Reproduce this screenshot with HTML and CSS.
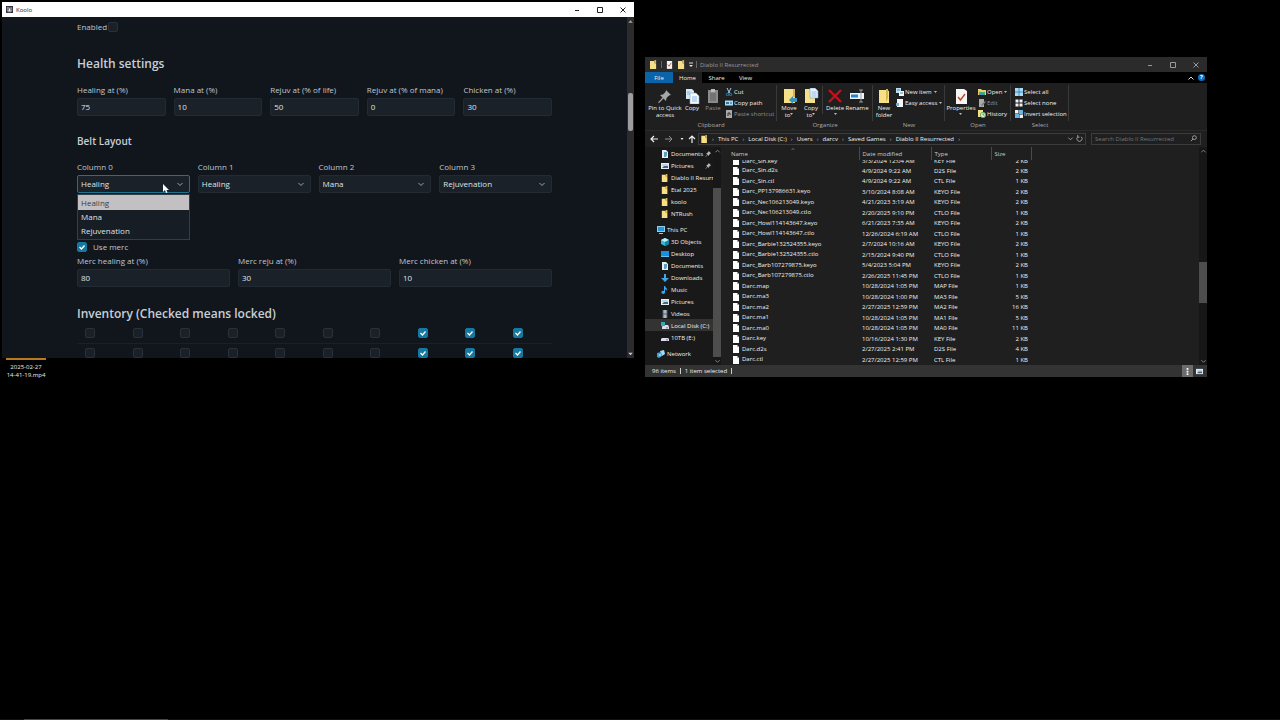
FILE: index.html
```html
<!DOCTYPE html>
<html lang="en">
<head>
<meta charset="utf-8">
<title>Desktop</title>
<link rel="stylesheet" href="styles.css">
</head>
<body>
<svg class="sprite" aria-hidden="true">
  <symbol id="folder" viewBox="0 0 8 10"><path d="M0 1h5v2l2 1v6H0z" fill="#f7df87"/><path d="M5 0h2v4H5z" fill="#e0b94c"/></symbol>
  <symbol id="file" viewBox="0 0 6 8"><path d="M0 0h4l2 2v6H0z" fill="#fff"/><path d="M4 0l2 2H4z" fill="#aaa"/></symbol>
  <symbol id="doc" viewBox="0 0 8 8"><path d="M1 0h4l2 2v6H1z" fill="#e8f0f4"/><path d="M3 2h3v3l-1 2H3z" fill="#5c9fc0"/></symbol>
  <symbol id="pic" viewBox="0 0 8 8"><path d="M0 1h8v6H0z" fill="#e6eef3"/><path d="M1 2h6v2H1z" fill="#b6d6e8"/><path d="M1 6l2-2h4v2z" fill="#4b6472"/></symbol>
  <symbol id="pc" viewBox="0 0 8 8"><path d="M0 0h8v6H0z" fill="#9bcbe2"/><path d="M1 1h6v4H1z" fill="#1f98dd"/><path d="M2 7h4v1H2z" fill="#9bcbe2"/></symbol>
  <symbol id="cube" viewBox="0 0 8 8"><path d="M0 2l4-2 4 2v4L4 8 0 6z" fill="#32b9d6"/><path d="M0 2l4-2 4 2-4 2z" fill="#c2eff4"/><path d="M4 4l4-2v4L4 8z" fill="#1585a6"/></symbol>
  <symbol id="screen" viewBox="0 0 8 8"><path d="M0 1h8v6H0z" fill="#1591df"/><path d="M0 6h8v1H0z" fill="#61c1ef"/></symbol>
  <symbol id="down" viewBox="0 0 8 8"><path d="M3 0h2v4h3L4 8 0 4h3z" fill="#41a5e6"/></symbol>
  <symbol id="note" viewBox="0 0 8 8"><path d="M3 0h1c0 2 3 2 2 5-.5-2-2-1.500-2-1.500V6.500A1.800 1.500 0 1 1 3 5z" fill="#3aa7ef"/></symbol>
  <symbol id="film" viewBox="0 0 8 8"><path d="M1 0h6v8H1z" fill="#55606a"/><path d="M2.500 0h3v3.500h-3zM2.500 4.500h3V8h-3z" fill="#a9b9c4"/><path d="M1 1h1M1 3h1M1 5h1M1 7h1M6 1h1M6 3h1M6 5h1M6 7h1" stroke="#111"/></symbol>
  <symbol id="disk" viewBox="0 0 8 8"><path d="M1 4h6l1 1v2H0V5z" fill="#dde"/><path d="M5 5.500h2v.8H5z" fill="#467"/></symbol>
  <symbol id="sysdisk" viewBox="0 0 8 8"><path d="M2 3h5l1 2v2H1V5z" fill="#dde"/><path d="M0 0h4v4H0z" fill="#35a7b8"/><path d="M5 5.500h2v.8H5z" fill="#467"/></symbol>
  <symbol id="net" viewBox="0 0 8 8"><path d="M3 1l4-1 1 4-3 2z" fill="#a6daf1"/><path d="M0 3l4-1 1 4-3 2-2-1z" fill="#3c9fd8"/><circle cx="3" cy="5" r="1.300" fill="#8bd0ef"/></symbol>
  <symbol id="pushpin" viewBox="0 0 8 8"><path d="M5 0l3 3-1 .5-1.500 1.500-.5 1.500L3.500 5 1 8l-.5-.5L3 4.500 1.500 3 3 2.500 4.500 1z" fill="#b5b5b5"/></symbol>
  <symbol id="up" viewBox="0 0 8 8"><path d="M1.500 5.500L4 3l2.500 2.500" fill="none" stroke="currentColor"/></symbol>
  <symbol id="dn" viewBox="0 0 8 8"><path d="M1.500 3L4 5.500 6.500 3" fill="none" stroke="currentColor"/></symbol>
  <symbol id="caret" viewBox="0 0 4 4"><path d="M0 1h4L2 3z" fill="currentColor"/></symbol>
  <symbol id="left-arrow" viewBox="0 0 8 8"><path d="M8 4H1M4 1L1 4l3 3" fill="none" stroke="currentColor" stroke-width="1.200"/></symbol>
  <symbol id="min" viewBox="0 0 8 8"><path d="M2 4.500h4" stroke="currentColor" fill="none"/></symbol>
  <symbol id="max" viewBox="0 0 8 8"><path d="M1.500 1.500h5v5h-5z" stroke="currentColor" fill="none"/></symbol>
  <symbol id="close" viewBox="0 0 8 8"><path d="M1.500 1.500l5 5M6.500 1.500l-5 5" stroke="currentColor" fill="none"/></symbol>
</svg>

<main class="desktop">
  <div class="shortcut"><span class="thumb"></span>2025-02-27<br>14-41-19.mp4</div>

  <section class="window koolo" aria-label="Koolo">
    <header class="koolo-bar">
      <svg class="app-icon" viewBox="0 0 8 8"><path d="M0 0h8v8H0z" fill="#33333d"/><path d="M1 1h2l1 1 2-1 1 1v4L5 7H2L1 5z" fill="#8e8795"/><path d="M3 3h2v3H3z" fill="#eee"/><path d="M2 3h1v1H2zM5 3h1v1H5z" fill="#15151d"/></svg>
      <span class="koolo-name">Koolo</span>
      <button class="win-btn" aria-label="Minimize"><svg><use href="#min"/></svg></button>
      <button class="win-btn" aria-label="Maximize"><svg><use href="#max"/></svg></button>
      <button class="win-btn" aria-label="Close"><svg><use href="#close"/></svg></button>
    </header>
    <div class="koolo-body">
      <form class="settings">
        <div class="check-row tight"><label for="enabled">Enabled</label><input type="checkbox" id="enabled"></div>
        <h2>Health settings</h2>
        <div class="fields">
          <div class="field"><label for="h1">Healing at (%)</label><input type="text" id="h1" value="75"></div>
          <div class="field"><label for="h2">Mana at (%)</label><input type="text" id="h2" value="10"></div>
          <div class="field"><label for="h3">Rejuv at (% of life)</label><input type="text" id="h3" value="50"></div>
          <div class="field"><label for="h4">Rejuv at (% of mana)</label><input type="text" id="h4" value="0"></div>
          <div class="field"><label for="h5">Chicken at (%)</label><input type="text" id="h5" value="30"></div>
        </div>
        <h3>Belt Layout</h3>
        <div class="fields">
          <div class="field open"><label for="c0">Column 0</label><select id="c0"><option>Healing</option><option>Mana</option><option>Rejuvenation</option></select>
            <ul class="options" role="listbox" aria-label="Column 0"><li role="option" aria-selected="true" class="picked">Healing</li><li role="option" aria-selected="false">Mana</li><li role="option" aria-selected="false">Rejuvenation</li></ul>
            <svg class="cursor" viewBox="0 0 6 9"><path d="M0 0v8l2-2 1 3 1.500-.5-1-2.500H6z" fill="#fff"/></svg>
          </div>
          <div class="field"><label for="c1">Column 1</label><select id="c1"><option>Healing</option><option>Mana</option><option>Rejuvenation</option></select></div>
          <div class="field"><label for="c2">Column 2</label><select id="c2"><option>Healing</option><option selected>Mana</option><option>Rejuvenation</option></select></div>
          <div class="field"><label for="c3">Column 3</label><select id="c3"><option>Healing</option><option>Mana</option><option selected>Rejuvenation</option></select></div>
        </div>
        <div class="check-row merc"><input type="checkbox" id="merc" checked><label for="merc">Use merc</label></div>
        <div class="fields merc-fields">
          <div class="field"><label for="m1">Merc healing at (%)</label><input type="text" id="m1" value="80"></div>
          <div class="field"><label for="m2">Merc reju at (%)</label><input type="text" id="m2" value="30"></div>
          <div class="field"><label for="m3">Merc chicken at (%)</label><input type="text" id="m3" value="10"></div>
        </div>
        <h2 class="inventory-title">Inventory (Checked means locked)</h2>
        <table class="inventory">
          <tr><td><input type="checkbox" aria-label="Row 1 slot 1"></td><td><input type="checkbox" aria-label="Row 1 slot 2"></td><td><input type="checkbox" aria-label="Row 1 slot 3"></td><td><input type="checkbox" aria-label="Row 1 slot 4"></td><td><input type="checkbox" aria-label="Row 1 slot 5"></td><td><input type="checkbox" aria-label="Row 1 slot 6"></td><td><input type="checkbox" aria-label="Row 1 slot 7"></td><td><input type="checkbox" checked aria-label="Row 1 slot 8"></td><td><input type="checkbox" checked aria-label="Row 1 slot 9"></td><td><input type="checkbox" checked aria-label="Row 1 slot 10"></td></tr>
          <tr><td><input type="checkbox" aria-label="Row 2 slot 1"></td><td><input type="checkbox" aria-label="Row 2 slot 2"></td><td><input type="checkbox" aria-label="Row 2 slot 3"></td><td><input type="checkbox" aria-label="Row 2 slot 4"></td><td><input type="checkbox" aria-label="Row 2 slot 5"></td><td><input type="checkbox" aria-label="Row 2 slot 6"></td><td><input type="checkbox" aria-label="Row 2 slot 7"></td><td><input type="checkbox" checked aria-label="Row 2 slot 8"></td><td><input type="checkbox" checked aria-label="Row 2 slot 9"></td><td><input type="checkbox" checked aria-label="Row 2 slot 10"></td></tr>
        </table>
      </form>
      <div class="scroll koolo-scroll"><svg viewBox="0 0 8 8"><path d="M1.500 6L4 3l2.500 3z" fill="#aaa"/></svg><span class="lead"></span><span class="grip"></span><span class="rest"></span><svg viewBox="0 0 8 8"><path d="M1.500 2.500h5L4 5.500z" fill="#ccc"/></svg></div>
    </div>
  </section>

  <section class="window explorer" aria-label="Diablo II Resurrected">
    <header class="exp-bar">
      <svg class="bar-icon"><use href="#folder"/></svg><span class="bar-rule"></span>
      <svg class="bar-icon" viewBox="0 0 8 10"><path d="M1 1h6v9H1z" fill="#f4f4f4"/><path d="M2 5l1.500 2L6 3" fill="none" stroke="#c5532f"/></svg>
      <svg class="bar-icon"><use href="#folder"/></svg>
      <svg class="bar-drop" viewBox="0 0 4 6"><path d="M0 1h4" stroke="#ddd"/><path d="M0 3h4L2 5z" fill="#ddd"/></svg><span class="bar-rule"></span>
      <span class="exp-title">Diablo II Resurrected</span>
      <button class="win-btn" aria-label="Minimize"><svg><use href="#min"/></svg></button>
      <button class="win-btn" aria-label="Maximize"><svg><use href="#max"/></svg></button>
      <button class="win-btn" aria-label="Close"><svg><use href="#close"/></svg></button>
    </header>
    <nav class="tabs">
      <button class="tab file">File</button><button class="tab active">Home</button><button class="tab">Share</button><button class="tab">View</button>
      <button class="collapse" aria-label="Collapse ribbon"><svg><use href="#up"/></svg></button>
      <button class="help" aria-label="Help">?</button>
    </nav>
    <div class="ribbon">
      <div class="group clipboard">
        <div class="tools">
          <button class="big pin"><svg viewBox="0 0 16 16"><path d="M9 2l5 5-2 .5L9.500 10 9 13 6.500 10.500 2 15l-1-.5L5.500 9.500 3 7l3-.5L8.500 4z" fill="#a7a7a7"/></svg><span>Pin to Quick access</span></button>
          <button class="big narrow"><svg viewBox="0 0 16 16"><path d="M2 1h6l2 2v8H2z" fill="#d6e6f3"/><path d="M6 5h6l3 3v8H6z" fill="#f5faff" stroke="#80a9cc" stroke-width=".6"/><path d="M8 9h5M8 11h5M8 13h5M3 4h3M3 6h3" stroke="#70a6d8" stroke-width=".8"/></svg><span>Copy</span></button>
          <button class="big dim"><svg viewBox="0 0 16 16"><path d="M3 2h10v13H3z" fill="#8b8b8b"/><path d="M6 1h4v3H6z" fill="#bbb"/><path d="M5 5h6v8H5z" fill="#747474"/></svg><span>Paste</span></button>
          <div class="smalls">
            <button><svg viewBox="0 0 8 8"><path d="M2 0l2.500 5M6 0L3.500 5" stroke="#a8cde8" fill="none"/><circle cx="2.500" cy="6.500" r="1.200" stroke="#238ac7" fill="none"/><circle cx="5.500" cy="6.500" r="1.200" stroke="#238ac7" fill="none"/></svg>Cut</button>
            <button><svg viewBox="0 0 8 8"><path d="M0 1.500h8v5H0z" fill="#a9dcf2"/><path d="M1 3h3v2H1z" fill="#277ba4"/><path d="M5 4h2" stroke="#23617e"/></svg>Copy path</button>
            <button class="dim"><svg viewBox="0 0 8 8"><path d="M1 0h6v8H1z" fill="#aaa"/><path d="M3 6V3h2v2" stroke="#333" fill="none"/></svg>Paste shortcut</button>
          </div>
        </div>
        <div class="group-name">Clipboard</div>
      </div>
      <div class="group organize">
        <div class="tools">
          <button class="big"><svg viewBox="0 0 16 16"><path d="M3 1h10l1 2v12H3z" fill="#f5df87"/><path d="M12 1h2v8h-2z" fill="#d6b34e"/><path d="M16 10h-4V8l-4 4 4 4v-2h4z" fill="#3c91bf"/></svg><span>Move<br>to<svg class="caret"><use href="#caret"/></svg></span></button>
          <button class="big"><svg viewBox="0 0 16 16"><path d="M2 1h10v14H2z" fill="#f5df87"/><path d="M7 0h5l3 3v7H7z" fill="#e9f3fb" stroke="#719fc7" stroke-width=".6"/><path d="M8.500 4h5M8.500 6h5M8.500 8h5" stroke="#70a6d8" stroke-width=".7"/></svg><span>Copy<br>to<svg class="caret"><use href="#caret"/></svg></span></button>
          <span class="rule"></span>
          <button class="big"><svg viewBox="0 0 16 16"><path d="M2 2l12 12M14 2L2 14" stroke="#c9101b" stroke-width="2.400"/></svg><span>Delete<br><svg class="caret"><use href="#caret"/></svg></span></button>
          <button class="big"><svg viewBox="0 0 16 16"><path d="M1 5h14v6H1z" fill="#edf6fc"/><path d="M2 6.500h7v3H2z" fill="#2785cd"/><path d="M10 2h4M12 2v12M10 14h4" stroke="#9a9a9a"/></svg><span>Rename</span></button>
        </div>
        <div class="group-name">Organize</div>
      </div>
      <div class="group new">
        <div class="tools">
          <button class="big"><svg viewBox="0 0 16 16"><path d="M3 2h7l3 1v12H3z" fill="#f5df87"/><path d="M10 1h2v9l-2 4z" fill="#d6b34e"/></svg><span>New folder</span></button>
          <div class="smalls">
            <button><svg viewBox="0 0 8 8"><path d="M0 0h5v5H0z" fill="#bcdcef"/><path d="M3 3h5v5H3z" fill="#f3f7fa"/><path d="M1 2h3M4 5h3" stroke="#4b8db9"/></svg>New item<svg class="caret"><use href="#caret"/></svg></button>
            <button><svg viewBox="0 0 8 8"><path d="M1 0h6v8H1z" fill="#f3f7fa"/><path d="M0 4h3v3H0z" fill="#6cb6dc"/></svg>Easy access<svg class="caret"><use href="#caret"/></svg></button>
          </div>
        </div>
        <div class="group-name">New</div>
      </div>
      <div class="group openers">
        <div class="tools">
          <button class="big wide"><svg viewBox="0 0 16 16"><path d="M3 1h8l3 2v13H3z" fill="#f6f6f6"/><path d="M5 9l2.500 3L12 6" fill="none" stroke="#c24d2c" stroke-width="1.500"/></svg><span>Properties<br><svg class="caret"><use href="#caret"/></svg></span></button>
          <div class="smalls">
            <button><svg viewBox="0 0 8 8"><path d="M0 1h3l1 1h4v5H0z" fill="#efcd64"/><path d="M1 4h6v3H1z" fill="#4bb069"/><path d="M2 5h4v2H2z" fill="#3e93ce"/></svg>Open<svg class="caret"><use href="#caret"/></svg></button>
            <button class="dim"><svg viewBox="0 0 8 8"><path d="M1 0h5v8H1z" fill="#aaa"/><path d="M3 6l4-4 1 1-4 4z" fill="#777"/></svg>Edit</button>
            <button><svg viewBox="0 0 8 8"><path d="M0 0h5v7H0z" fill="#f5df87"/><circle cx="5" cy="5" r="2.700" fill="#d8f1cf" stroke="#4ca450" stroke-width=".8"/><path d="M5 3.500V5h1.500" stroke="#27722b" stroke-width=".7" fill="none"/></svg>History</button>
          </div>
        </div>
        <div class="group-name">Open</div>
      </div>
      <div class="group selectors">
        <div class="tools">
          <div class="smalls">
            <button><svg viewBox="0 0 8 8"><path d="M0 0h8v8H0z" fill="#a8dcf6"/><path d="M4 0v8M0 4h8" stroke="#2976a8" stroke-width=".8"/></svg>Select all</button>
            <button><svg viewBox="0 0 8 8"><path d="M.5.5h3v3h-3zM4.500.5h3v3h-3zM.5 4.500h3v3h-3zM4.500 4.500h3v3h-3z" fill="#f1f1f1"/></svg>Select none</button>
            <button><svg viewBox="0 0 8 8"><path d="M0 0h3.500v3.500H0zM4.500 4.500H8V8H4.500z" fill="#f1f1f1"/><path d="M4 0h4v4H4zM0 4h4v4H0z" fill="#65b8e3"/></svg>Invert selection</button>
          </div>
        </div>
        <div class="group-name">Select</div>
      </div>
    </div>
    <div class="address">
      <button class="go" aria-label="Back"><svg><use href="#left-arrow"/></svg></button>
      <button class="go dim" aria-label="Forward"><svg viewBox="0 0 8 8"><path d="M0 4h7M4 1l3 3-3 3" fill="none" stroke="currentColor"/></svg></button>
      <button class="go slim" aria-label="Recent"><svg viewBox="0 0 8 8"><path d="M1 2h6L4 6z" fill="currentColor"/></svg></button>
      <button class="go" aria-label="Up"><svg viewBox="0 0 8 8"><path d="M4 8V1M1 4l3-3 3 3" fill="none" stroke="currentColor" stroke-width="1.200"/></svg></button>
      <div class="crumbs">
        <svg><use href="#folder"/></svg><i>›</i><a href="#">This PC</a><i>›</i><a href="#">Local Disk (C:)</a><i>›</i><a href="#">Users</a><i>›</i><a href="#">darcv</a><i>›</i><a href="#">Saved Games</a><i>›</i><a href="#">Diablo II Resurrected</a><i>›</i>
        <span class="crumb-tools"><svg><use href="#dn"/></svg><svg viewBox="0 0 8 8"><path d="M2 2A3 3 0 1 0 6 2M2 0v2.500h2" fill="none" stroke="currentColor"/></svg></span>
      </div>
      <div class="search"><input type="text" aria-label="Search" placeholder="Search Diablo II Resurrected"><svg viewBox="0 0 8 8"><circle cx="5" cy="3" r="2.200" fill="none" stroke="currentColor"/><path d="M3.500 4.500L1 7" stroke="currentColor"/></svg></div>
    </div>
    <div class="panes">
      <nav class="tree">
        <a href="#"><svg><use href="#doc"/></svg>Documents<svg class="pinned"><use href="#pushpin"/></svg></a>
        <a href="#"><svg><use href="#pic"/></svg>Pictures<svg class="pinned"><use href="#pushpin"/></svg></a>
        <a href="#"><svg><use href="#folder"/></svg><span class="cut">Diablo II Resurrected</span></a>
        <a href="#"><svg><use href="#folder"/></svg>Etal 2025</a>
        <a href="#"><svg><use href="#folder"/></svg>koolo</a>
        <a href="#"><svg><use href="#folder"/></svg>NTRush</a>
        <a href="#" class="root"><svg><use href="#pc"/></svg>This PC</a>
        <a href="#"><svg><use href="#cube"/></svg>3D Objects</a>
        <a href="#"><svg><use href="#screen"/></svg>Desktop</a>
        <a href="#"><svg><use href="#doc"/></svg>Documents</a>
        <a href="#"><svg><use href="#down"/></svg>Downloads</a>
        <a href="#"><svg><use href="#note"/></svg>Music</a>
        <a href="#"><svg><use href="#pic"/></svg>Pictures</a>
        <a href="#"><svg><use href="#film"/></svg>Videos</a>
        <a href="#" class="current"><svg><use href="#sysdisk"/></svg>Local Disk (C:)</a>
        <a href="#"><svg><use href="#disk"/></svg>10TB (E:)</a>
        <a href="#" class="root"><svg><use href="#net"/></svg>Network</a>
      </nav>
      <div class="scroll tree-scroll"><svg><use href="#up"/></svg><span class="lead"></span><span class="grip"></span><svg><use href="#dn"/></svg></div>
      <div class="listing">
        <table class="files">
          <thead><tr><th class="c-name">Name<svg class="sort"><use href="#up"/></svg></th><th class="c-date">Date modified</th><th class="c-type">Type</th><th class="c-size">Size</th></tr></thead>
          <tbody>
            <tr class="partial"><td><div><svg><use href="#file"/></svg>Darc_Sin.key</div></td><td><div>3/3/2024 12:04 AM</div></td><td><div>KEY File</div></td><td><div>2 KB</div></td></tr>
            <tr><td><svg><use href="#file"/></svg>Darc_Sin.d2s</td><td>4/9/2024 9:22 AM</td><td>D2S File</td><td>2 KB</td></tr>
            <tr><td><svg><use href="#file"/></svg>Darc_Sin.ctl</td><td>4/9/2024 9:22 AM</td><td>CTL File</td><td>1 KB</td></tr>
            <tr><td><svg><use href="#file"/></svg>Darc_PP137986631.keyo</td><td>3/10/2024 8:08 AM</td><td>KEYO File</td><td>2 KB</td></tr>
            <tr><td><svg><use href="#file"/></svg>Darc_Nec106213049.keyo</td><td>4/21/2023 3:19 AM</td><td>KEYO File</td><td>2 KB</td></tr>
            <tr><td><svg><use href="#file"/></svg>Darc_Nec106213049.ctlo</td><td>2/20/2025 9:10 PM</td><td>CTLO File</td><td>1 KB</td></tr>
            <tr><td><svg><use href="#file"/></svg>Darc_Howl114143647.keyo</td><td>6/21/2023 7:35 AM</td><td>KEYO File</td><td>2 KB</td></tr>
            <tr><td><svg><use href="#file"/></svg>Darc_Howl114143647.ctlo</td><td>12/26/2024 6:19 AM</td><td>CTLO File</td><td>1 KB</td></tr>
            <tr><td><svg><use href="#file"/></svg>Darc_Barbie132524355.keyo</td><td>2/7/2024 10:16 AM</td><td>KEYO File</td><td>2 KB</td></tr>
            <tr><td><svg><use href="#file"/></svg>Darc_Barbie132524355.ctlo</td><td>2/15/2024 9:40 PM</td><td>CTLO File</td><td>1 KB</td></tr>
            <tr><td><svg><use href="#file"/></svg>Darc_Barb107279875.keyo</td><td>5/4/2023 5:04 PM</td><td>KEYO File</td><td>2 KB</td></tr>
            <tr><td><svg><use href="#file"/></svg>Darc_Barb107279875.ctlo</td><td>2/26/2025 11:45 PM</td><td>CTLO File</td><td>1 KB</td></tr>
            <tr><td><svg><use href="#file"/></svg>Darc.map</td><td>10/28/2024 1:05 PM</td><td>MAP File</td><td>1 KB</td></tr>
            <tr><td><svg><use href="#file"/></svg>Darc.ma3</td><td>10/28/2024 1:00 PM</td><td>MA3 File</td><td>5 KB</td></tr>
            <tr><td><svg><use href="#file"/></svg>Darc.ma2</td><td>2/27/2025 12:59 PM</td><td>MA2 File</td><td>16 KB</td></tr>
            <tr><td><svg><use href="#file"/></svg>Darc.ma1</td><td>10/28/2024 1:05 PM</td><td>MA1 File</td><td>5 KB</td></tr>
            <tr><td><svg><use href="#file"/></svg>Darc.ma0</td><td>10/28/2024 1:05 PM</td><td>MA0 File</td><td>11 KB</td></tr>
            <tr><td><svg><use href="#file"/></svg>Darc.key</td><td>10/16/2024 1:30 PM</td><td>KEY File</td><td>2 KB</td></tr>
            <tr><td><svg><use href="#file"/></svg>Darc.d2s</td><td>2/27/2025 2:41 PM</td><td>D2S File</td><td>4 KB</td></tr>
            <tr><td><svg><use href="#file"/></svg>Darc.ctl</td><td>2/27/2025 12:59 PM</td><td>CTL File</td><td>1 KB</td></tr>
          </tbody>
        </table>
      </div>
      <div class="scroll list-scroll"><svg><use href="#up"/></svg><span class="lead"></span><span class="grip"></span><span class="rest"></span><svg><use href="#dn"/></svg></div>
    </div>
    <footer class="status">
      <span>96 items</span><i></i><span>1 item selected</span><i></i>
      <button class="view on" aria-label="Details"><svg viewBox="0 0 8 8"><path d="M3 0h2v2H3zM3 3h2v2H3zM3 6h2v2H3z" fill="#fff"/></svg></button>
      <button class="view" aria-label="Large icons"><svg><use href="#pic"/></svg></button>
    </footer>
  </section>
  <div class="taskbar"><span></span></div>
</main>
</body>
</html>
```
FILE: styles.css
```css
* { box-sizing: border-box; }
body { margin: 0; background: #000; font-family: "Open Sans", "Noto Sans", sans-serif; }
button, input, select { font: inherit; color: inherit; border: 0; padding: 0; margin: 0; background: none; }
a { color: inherit; text-decoration: none; }
i { font-style: normal; }
svg { display: block; flex: none; }
.sprite { position: absolute; width: 0; height: 0; }
.desktop { position: relative; height: 100vh; overflow: hidden; }
.window { position: absolute; display: flex; flex-direction: column; overflow: hidden; }

.shortcut { position: absolute; left: 6px; top: 358px; width: 40px; font-size: 6px; line-height: 8px; color: #eee; text-align: center; white-space: nowrap; }
.thumb { display: block; height: 2px; margin-bottom: 3px; background: #b9791f; }
.taskbar { position: absolute; left: 0; right: 0; bottom: 0; height: 1px; padding-left: 24px; background: #150f11; }
.taskbar span { display: block; width: 144px; height: 1px; background: #4a4648; }

/* Koolo */
.koolo { left: 2px; top: 2px; width: calc(50vw - 8px); height: calc(50vh - 4px); background: #11161d; color: #c0c7ce; font-size: 8px; }
.koolo-bar { display: flex; flex: none; align-items: center; height: 15px; padding-left: 4px; background: #fff; color: #222; }
.app-icon { width: 7px; height: 7px; }
.koolo-name { flex: 1; padding-left: 3px; font-size: 6px; }
.win-btn { display: flex; align-items: center; justify-content: center; width: 23px; height: 15px; }
.win-btn svg { width: 8px; height: 8px; }
.koolo-body { display: flex; flex: 1; min-height: 0; }
.settings { flex: 1; min-width: 0; padding: 5px 75px 0; overflow: hidden; line-height: 10px; }
.check-row { display: flex; align-items: center; height: 10px; gap: 6px; }
.check-row.tight { gap: 1px; }
.check-row.merc { margin-top: 49px; }
input[type=checkbox] { display: block; appearance: none; width: 10px; height: 10px; border: 1px solid #2a313a; border-radius: 2px; background: #1a2027; }
input[type=checkbox]:checked { border-color: #17789f; background: #17789f url("data:image/svg+xml,%3Csvg xmlns='http://www.w3.org/2000/svg' viewBox='0 0 8 8'%3E%3Cpath d='M1.500 4l2 2 3-3.500' fill='none' stroke='white' stroke-width='1.300'/%3E%3C/svg%3E") center / 8px 8px; }
h2, h3 { margin: 24px 0 13px; color: #c8ced6; font-size: 12px; font-weight: 600; line-height: 16px; white-space: nowrap; }
h3 { margin-top: 18px; margin-bottom: 14px; font-size: 10px; line-height: 14px; }
.fields { display: flex; gap: 8px; }
.merc-fields { margin-top: 4px; }
.field { position: relative; display: flex; flex: 1 1 0; flex-direction: column; min-width: 0; gap: 3px; }
.field label { white-space: nowrap; }
.field input, .field select { width: 100%; height: 18px; padding: 0 3px 1px; border: 1px solid #222b33; border-radius: 2px; background-color: #1a2128; color: #dee3e8; }
.field select { appearance: none; background-image: url("data:image/svg+xml,%3Csvg xmlns='http://www.w3.org/2000/svg' viewBox='0 0 8 8'%3E%3Cpath d='M1.500 3L4 5.500 6.500 3' fill='none' stroke='%239aa4ad'/%3E%3C/svg%3E"); background-repeat: no-repeat; background-position: right 5px center; background-size: 8px 8px; }
.field.open select { border-color: #1b7390; }
.options { position: absolute; z-index: 1; top: 32px; left: 0; right: 0; margin: 0; padding: 0 0 1px; list-style: none; border: 1px solid #363d45; background: #171d24; color: #dee3e8; }
.options li { padding: 0 3px; line-height: 14px; }
.options .picked { height: 15px; line-height: 15px; background: #c3c0c3; color: #3a3a40; }
.cursor { position: absolute; z-index: 2; left: 86px; top: 22px; width: 6px; height: 9px; }
.inventory-title { margin: 19px 0 1px; }
.inventory { width: 100%; border-collapse: collapse; table-layout: fixed; }
.inventory td { height: 20px; padding: 0 8px; border-bottom: 1px solid #1a2027; }

.scroll { display: flex; flex: none; flex-direction: column; align-items: center; width: 8px; background: #171717; color: #8b8b8b; }
.scroll svg { width: 7px; height: 8px; }
.scroll .grip { width: 100%; background: #4d4d4d; }
.koolo-scroll { width: 7px; background: #2b2b2b; }
.koolo-scroll .lead { flex: 68; }
.koolo-scroll .grip { flex: 38; width: 5px; border-radius: 2px; background: #9d9d9d; }
.koolo-scroll .rest { flex: 219; }

/* File explorer */
.explorer { left: calc(50vw + 5px); top: 57px; width: calc(50vw - 78px); height: calc(50vh - 40px); background: #1f1f1f; color: #f0f0f0; font-size: 6px; line-height: 8px; white-space: nowrap; }
.exp-bar { display: flex; flex: none; align-items: center; height: 15px; padding-left: 5px; background: #2b2b2b; color: #999; }
.bar-icon { width: 7px; height: 9px; }
.bar-icon + .bar-icon { margin-left: 5px; }
.bar-rule { width: 1px; height: 7px; margin: 0 4px; background: #666; }
.bar-drop { width: 4px; height: 6px; margin-left: 4px; }
.bar-drop + .bar-rule { margin: 0 3px; }
.exp-title { flex: 1; }
.tabs { display: flex; flex: none; height: 11px; background: #000; }
.tab { width: 29px; color: #eee; }
.tab.file { width: 28px; background: #0b63a9; }
.tab.active { background: #1f1f1f; }
.collapse { width: 8px; margin-left: auto; color: #ddd; }
.collapse svg { width: 8px; height: 8px; }
.help { align-self: center; width: 7px; height: 7px; margin: 0 2px 0 3px; border-radius: 4px; background: #0a70c4; color: #fff; font-weight: 700; line-height: 7px; }
.ribbon { display: flex; flex: none; height: 48px; border-bottom: 1px solid #2a2a2a; }
.group { display: flex; flex-direction: column; flex: none; padding-top: 3px; background: linear-gradient(#3a3a3a, #3a3a3a) right 2px / 1px 36px no-repeat; }
.clipboard { width: 132px; }
.organize { width: 96px; }
.new { width: 72px; }
.openers { width: 66px; }
.selectors { width: 58px; }
.tools { display: flex; height: 34px; }
.clipboard .tools { padding-left: 3px; }
.organize .tools { padding-left: 1px; }
.selectors .tools { padding-left: 3px; }
.group-name { line-height: 10px; color: #aaa; text-align: center; }
.big { display: flex; flex: none; flex-direction: column; align-items: center; width: 22px; padding-top: 2px; gap: 1px; line-height: 7px; white-space: normal; }
.big > svg { width: 16px; height: 16px; }
.big.pin { width: 34px; }
.big.narrow { width: 20px; }
.big.wide { width: 32px; }
.big .caret { display: inline-block; margin-left: 2px; vertical-align: top; }
.big br + .caret { margin-left: 0; }
.dim { color: #8f8f8f; }
.rule { width: 1px; height: 28px; margin: 0 1px 0 0; background: #3a3a3a; }
.smalls { display: flex; flex-direction: column; }
.smalls button { display: flex; align-items: center; gap: 1px; height: 11px; padding-left: 1px; }
.smalls svg { width: 8px; height: 8px; }
.caret, .smalls .caret { width: 3px; height: 4px; }
.smalls .caret { margin-left: 1px; }
.address { display: flex; flex: none; align-items: center; height: 16px; padding: 0 6px 1px 5px; }
.go { width: 8px; margin-right: 7px; color: #eee; }
.go svg { width: 8px; height: 8px; }
.go.dim { color: #8f8f8f; }
.go.slim { width: 4px; margin-right: 4px; }
.go.slim svg { width: 4px; height: 4px; }
.go + .crumbs { margin-left: -5px; }
.crumbs { display: flex; flex: 1; align-items: center; height: 12px; padding: 0 2px; border: 1px solid #3c3c3c; }
.crumbs svg { width: 7px; height: 8px; }
.crumbs i { width: 10px; color: #bbb; text-align: center; }
.crumb-tools { display: flex; gap: 2px; margin-left: auto; color: #aaa; }
.crumb-tools svg { width: 7px; height: 7px; }
.search { display: flex; align-items: center; width: 110px; height: 12px; margin-left: 5px; padding: 0 3px; border: 1px solid #3c3c3c; color: #aaa; }
.search input { flex: 1; min-width: 0; height: 10px; }
.search input::placeholder { color: #777; opacity: 1; }
.search svg { width: 7px; height: 7px; }
.panes { display: flex; flex: 1; min-height: 0; }
.tree { display: flex; flex: none; flex-direction: column; width: 68px; background: #191919; overflow: hidden; }
.tree a { display: flex; flex: none; align-items: center; height: 12px; padding: 1px 0 0 16px; gap: 2px; }
.tree a svg { width: 8px; height: 8px; }
.tree a .pinned { width: 6px; height: 6px; margin: 0 2px 0 auto; }
.tree .cut { overflow: hidden; }
.tree .root { margin-top: 4px; padding-left: 12px; }
.tree .current { background: #333; }
.tree-scroll .lead { flex: 33; }
.tree-scroll .grip { flex: 169; }
.listing { flex: 1; min-width: 0; overflow: hidden; }
.files { width: 310px; border-collapse: collapse; table-layout: fixed; }
.files th { height: 13px; padding: 0 3px; border-right: 1px solid #4a4a4a; color: #ccc; font-weight: 400; text-align: left; }
.files .c-name { position: relative; width: 138px; padding-left: 10px; }
.sort { position: absolute; top: 0; left: 50%; width: 6px; height: 4px; }
.c-date { width: 72px; }
.c-type { width: 60px; }
.c-size { width: 40px; }
.files td { height: 10px; padding: 0 3px; }
.files tr:nth-child(even) td { height: 11px; }
.files td:first-child { padding-left: 12px; }
.files td:last-child { text-align: right; }
.files td svg { display: inline-block; width: 6px; height: 8px; margin-right: 3px; vertical-align: middle; }
.files .partial td { height: 5px; }
.partial div { display: flex; align-items: flex-end; height: 5px; overflow: hidden; }
.partial td:last-child div { justify-content: flex-end; }
.list-scroll .lead { flex: 107; }
.list-scroll .grip { flex: 41; }
.list-scroll .rest { flex: 54; }
.status { display: flex; flex: none; align-items: center; height: 12px; padding-left: 7px; background: #333; }
.status i { width: 1px; height: 6px; margin: 0 4px; background: #ccc; }
.view { display: flex; align-items: center; justify-content: center; width: 11px; height: 12px; margin-right: 2px; }
.view.on { margin: 0 1px 0 auto; background: #6b6b6b; }
.view svg { width: 7px; height: 7px; }
```
